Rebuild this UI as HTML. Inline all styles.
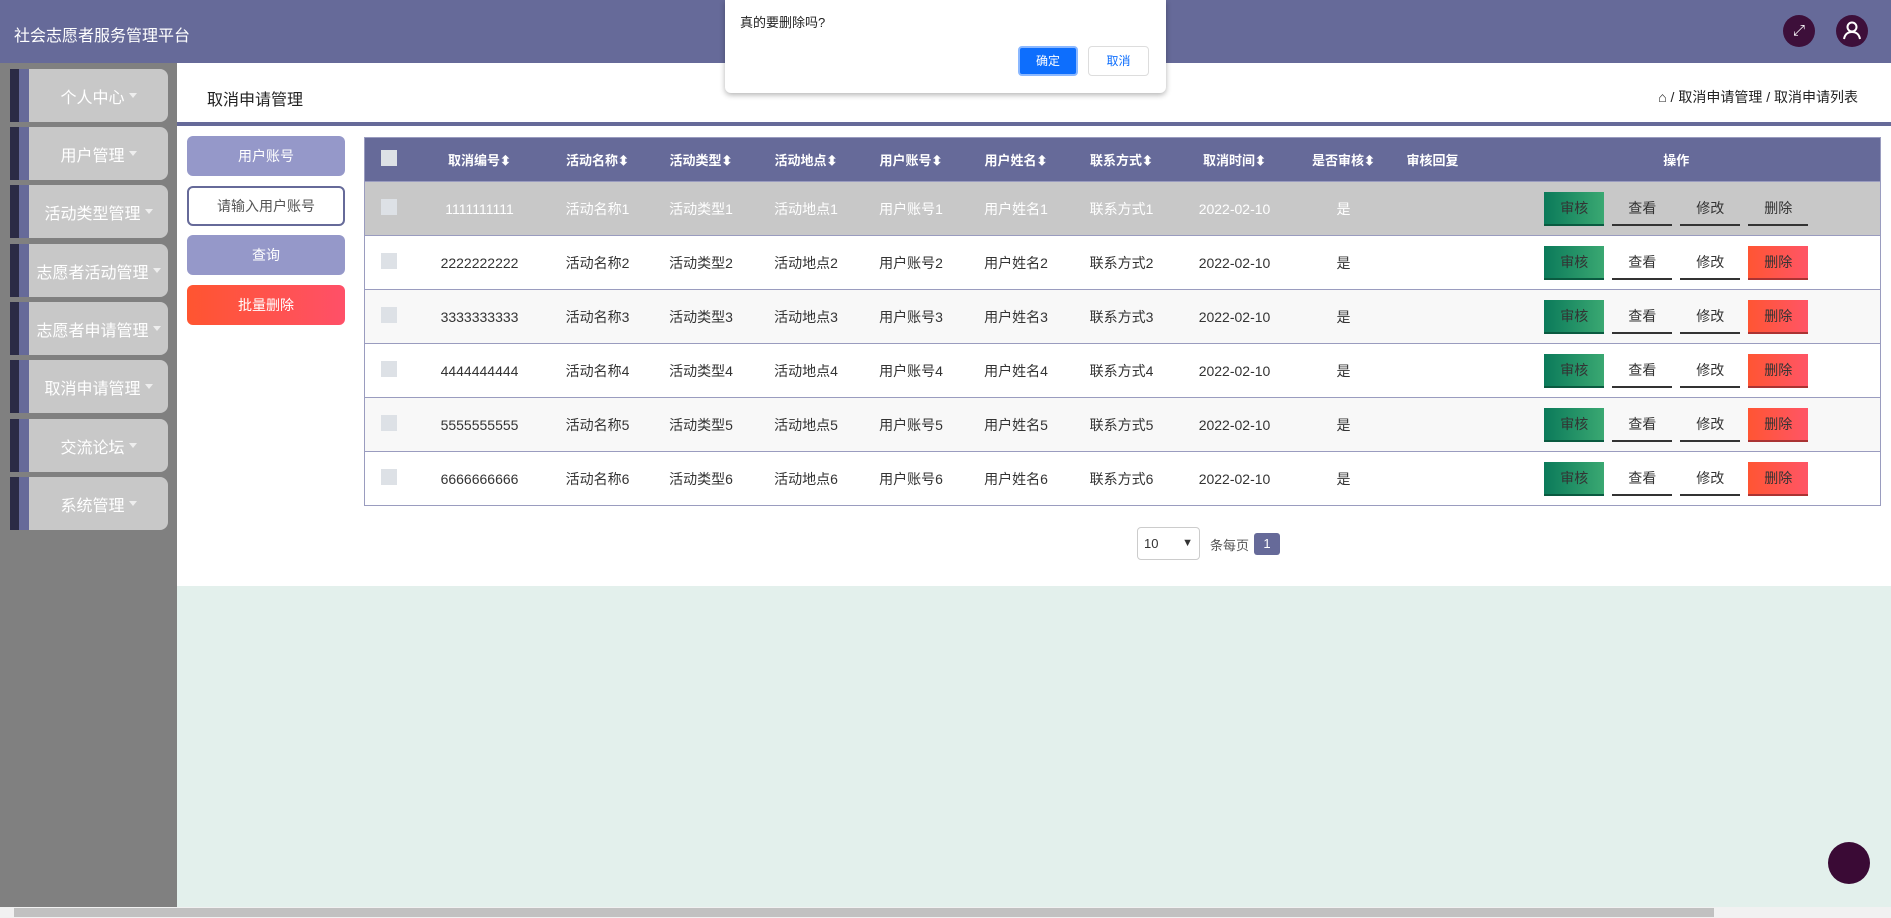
<!DOCTYPE html>
<html><head><meta charset="utf-8"><style>
*{box-sizing:border-box;margin:0;padding:0}
body{width:1891px;height:918px;overflow:hidden;position:relative;font-family:"Liberation Sans","Noto Sans CJK SC",sans-serif;background:#fff;font-size:14px;color:#333}
.a{position:absolute}
.hdr{left:0;top:0;width:1891px;height:63px;background:#666a99}
.side{left:0;top:63px;width:177px;height:845px;background:#808080}
.mi{left:10px;width:158px;height:53px}
.mi .d{position:absolute;left:0;top:0;width:9px;height:53px;background:#2b2b45}
.mi .p{position:absolute;left:9px;top:0;width:10px;height:53px;background:#666a99}
.mi .g{position:absolute;left:19px;top:0;width:139px;height:53px;background:#c8c8c8;border-radius:0 8px 8px 0;color:#fff;font-size:16px;display:flex;align-items:center;justify-content:center;white-space:nowrap}
.car{display:inline-block;border-left:4px solid transparent;border-right:4px solid transparent;border-top:5px solid #eee;margin-left:4px;vertical-align:middle}
.btn{left:187px;width:158px;height:40px;border-radius:6px;display:flex;align-items:center;justify-content:center;color:#fff;font-size:14px}
table{border-collapse:collapse;position:absolute;left:364px;top:137px;width:1517px;font-size:14px}
th{background:#666a99;color:#fff;height:44px;font-weight:bold;font-size:13px}
td{height:54px;text-align:center;border-top:1px solid #9a9cbf}
tr.r1 td{background:#c8c8c8;color:#fff}
tr.alt td{background:#f8f8f8}
.cb{display:inline-block;width:16px;height:16px;background:#dde1e6}
.ab{display:inline-block;width:60px;height:34px;line-height:32px;margin:0 4px;font-size:14px;color:#333;border-bottom:2px solid #333}
.sh{background:linear-gradient(90deg,#0b7a5a,#3aa872);border-bottom-color:#0a5a40}
.de{background:linear-gradient(90deg,#ff5533,#ff5566);border-bottom-color:#a33}
</style></head><body>
<div class="a hdr"></div>
<div class="a" style="left:14px;top:22px;color:#fff;font-size:16px">社会志愿者服务管理平台</div>
<div class="a" style="left:1783px;top:15px;width:32px;height:32px;border-radius:50%;background:#3d0f3a;color:#fff;text-align:center;line-height:32px;font-size:15px">⤢</div>
<div class="a" style="left:1836px;top:15px;width:32px;height:32px;border-radius:50%;background:#3d0f3a"><svg width="32" height="32" viewBox="0 0 32 32"><circle cx="16" cy="12" r="4.5" fill="none" stroke="#fff" stroke-width="2"/><path d="M8 24c1-5 4-7 8-7s7 2 8 7" fill="none" stroke="#fff" stroke-width="2"/></svg></div>
<div class="a side"></div>
<div class="a mi" style="top:69px"><div class="d"></div><div class="p"></div><div class="g">个人中心<span class="car"></span></div></div>
<div class="a mi" style="top:127px"><div class="d"></div><div class="p"></div><div class="g">用户管理<span class="car"></span></div></div>
<div class="a mi" style="top:185px"><div class="d"></div><div class="p"></div><div class="g">活动类型管理<span class="car"></span></div></div>
<div class="a mi" style="top:244px"><div class="d"></div><div class="p"></div><div class="g">志愿者活动管理<span class="car"></span></div></div>
<div class="a mi" style="top:302px"><div class="d"></div><div class="p"></div><div class="g">志愿者申请管理<span class="car"></span></div></div>
<div class="a mi" style="top:360px"><div class="d"></div><div class="p"></div><div class="g">取消申请管理<span class="car"></span></div></div>
<div class="a mi" style="top:419px"><div class="d"></div><div class="p"></div><div class="g">交流论坛<span class="car"></span></div></div>
<div class="a mi" style="top:477px"><div class="d"></div><div class="p"></div><div class="g">系统管理<span class="car"></span></div></div>
<div class="a" style="left:207px;top:86px;font-size:16px;color:#222">取消申请管理</div>
<div class="a" style="right:33px;top:87px;font-size:14px;color:#222">⌂ / 取消申请管理 / 取消申请列表</div>
<div class="a" style="left:177px;top:122px;width:1714px;height:4px;background:#666a99"></div>
<div class="a" style="left:177px;top:586px;width:1714px;height:321px;background:#e3f0ec"></div>
<div class="a btn" style="top:136px;background:#9598c9">用户账号</div>
<div class="a btn" style="top:186px;background:#fff;border:2px solid #666a99;color:#555">请输入用户账号</div>
<div class="a btn" style="top:235px;background:#9598c9">查询</div>
<div class="a btn" style="top:285px;background:linear-gradient(90deg,#ff5530,#ff5068)">批量删除</div>
<table style="border:1px solid #9a9cbf">
<tr><th style="width:48px"><span class="cb"></span></th><th style="width:134px">取消编号⬍</th><th style="width:102px">活动名称⬍</th><th style="width:105px">活动类型⬍</th><th style="width:105px">活动地点⬍</th><th style="width:105px">用户账号⬍</th><th style="width:105px">用户姓名⬍</th><th style="width:106px">联系方式⬍</th><th style="width:120px">取消时间⬍</th><th style="width:98px">是否审核⬍</th><th style="width:80px">审核回复</th><th>操作</th></tr>
<tr class="r1"><td><span class="cb"></span></td><td>1111111111</td><td>活动名称1</td><td>活动类型1</td><td>活动地点1</td><td>用户账号1</td><td>用户姓名1</td><td>联系方式1</td><td>2022-02-10</td><td>是</td><td></td><td><span class="ab sh">审核</span><span class="ab">查看</span><span class="ab">修改</span><span class="ab">删除</span></td></tr>
<tr><td><span class="cb"></span></td><td>2222222222</td><td>活动名称2</td><td>活动类型2</td><td>活动地点2</td><td>用户账号2</td><td>用户姓名2</td><td>联系方式2</td><td>2022-02-10</td><td>是</td><td></td><td><span class="ab sh">审核</span><span class="ab">查看</span><span class="ab">修改</span><span class="ab de">删除</span></td></tr>
<tr class="alt"><td><span class="cb"></span></td><td>3333333333</td><td>活动名称3</td><td>活动类型3</td><td>活动地点3</td><td>用户账号3</td><td>用户姓名3</td><td>联系方式3</td><td>2022-02-10</td><td>是</td><td></td><td><span class="ab sh">审核</span><span class="ab">查看</span><span class="ab">修改</span><span class="ab de">删除</span></td></tr>
<tr><td><span class="cb"></span></td><td>4444444444</td><td>活动名称4</td><td>活动类型4</td><td>活动地点4</td><td>用户账号4</td><td>用户姓名4</td><td>联系方式4</td><td>2022-02-10</td><td>是</td><td></td><td><span class="ab sh">审核</span><span class="ab">查看</span><span class="ab">修改</span><span class="ab de">删除</span></td></tr>
<tr class="alt"><td><span class="cb"></span></td><td>5555555555</td><td>活动名称5</td><td>活动类型5</td><td>活动地点5</td><td>用户账号5</td><td>用户姓名5</td><td>联系方式5</td><td>2022-02-10</td><td>是</td><td></td><td><span class="ab sh">审核</span><span class="ab">查看</span><span class="ab">修改</span><span class="ab de">删除</span></td></tr>
<tr><td><span class="cb"></span></td><td>6666666666</td><td>活动名称6</td><td>活动类型6</td><td>活动地点6</td><td>用户账号6</td><td>用户姓名6</td><td>联系方式6</td><td>2022-02-10</td><td>是</td><td></td><td><span class="ab sh">审核</span><span class="ab">查看</span><span class="ab">修改</span><span class="ab de">删除</span></td></tr>
</table>
<div class="a" style="left:1137px;top:527px;width:63px;height:33px;border:1px solid #ccc;border-radius:4px;background:#fff;font-size:13px;line-height:31px;padding-left:6px;color:#333">10<span style="position:absolute;right:6px;font-size:11px">▼</span></div>
<div class="a" style="left:1210px;top:535px;font-size:13px;color:#555">条每页</div>
<div class="a" style="left:1254px;top:533px;width:26px;height:22px;background:#666a99;color:#fff;border-radius:3px;text-align:center;line-height:22px;font-size:13px">1</div>
<div class="a" style="left:1828px;top:842px;width:42px;height:42px;border-radius:50%;background:#3a0a35"></div>
<div class="a" style="left:0;top:907px;width:1891px;height:11px;background:#f1f1f1"></div>
<div class="a" style="left:14px;top:908px;width:1700px;height:9px;background:#c1c1c1"></div>
<div class="a" style="left:725px;top:0;width:441px;height:93px;background:#fff;border-radius:0 0 6px 6px;box-shadow:0 2px 6px rgba(0,0,0,.3)"></div>
<div class="a" style="left:740px;top:12px;font-size:13px;color:#222">真的要删除吗?</div>
<div class="a" style="left:1018px;top:46px;width:60px;height:30px;background:#0d6efd;border:2px solid #8bb8ff;border-radius:4px;color:#fff;font-size:12px;text-align:center;line-height:26px">确定</div>
<div class="a" style="left:1088px;top:46px;width:61px;height:30px;background:#fff;border:1px solid #ddd;border-radius:4px;color:#0d6efd;font-size:12px;text-align:center;line-height:28px">取消</div>
</body></html>
